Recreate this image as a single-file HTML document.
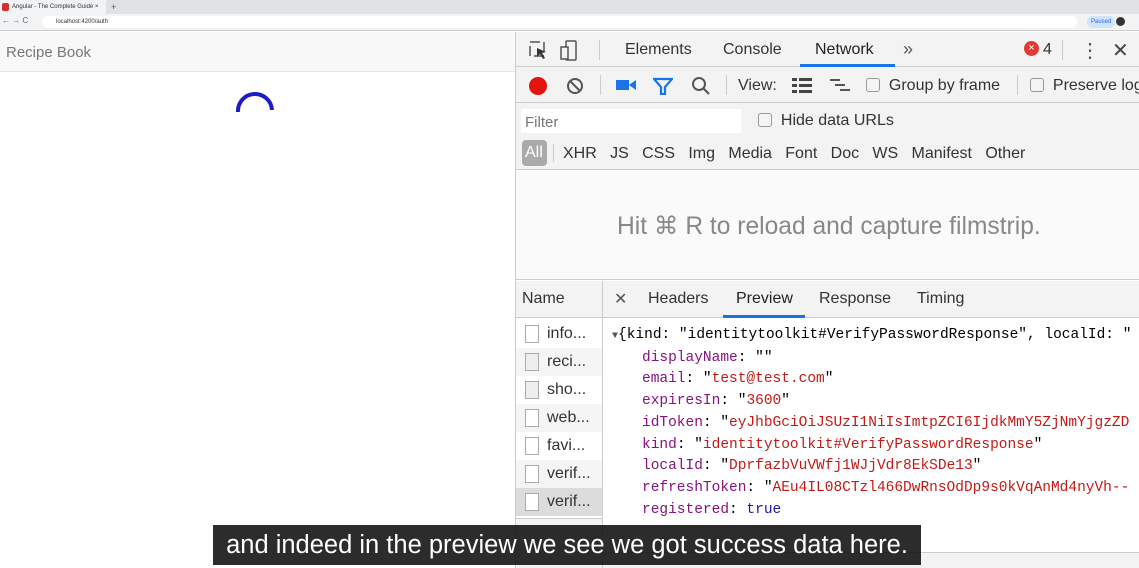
<!DOCTYPE html>
<html><head><style>
*{margin:0;padding:0;box-sizing:border-box}
body{width:1139px;height:568px;overflow:hidden;background:#fff;font-family:"Liberation Sans",sans-serif;position:relative}
.a{position:absolute}
.mono{font-family:"Liberation Mono",monospace;font-size:14.5px;white-space:nowrap}
.k{color:#881280}.s{color:#c41a16}.b{color:#1a1aa6}
.cb{display:inline-block;width:14px;height:14px;border:1px solid #999;border-radius:3px;background:#f4f4f4;vertical-align:-2px}
.t{font-size:16px;color:#333;white-space:nowrap}
.row{position:absolute;left:516px;width:86px;height:28px;font-size:16px;color:#333}
.row i{position:absolute;left:9px;top:5px;width:14px;height:18px;border:1px solid #aaa;background:#fff}
.row span{position:absolute;left:31px;top:5px}
</style></head><body>
<!-- chrome -->
<div class="a" style="left:0;top:0;width:1139px;height:14px;background:#dfe1e5"></div>
<div class="a" style="left:0;top:0;width:106px;height:14px;background:#f1f3f4;font-size:6px;color:#333;padding:4px 0 0 12px">Angular - The Complete Guide ×</div>
<div class="a" style="left:2px;top:3px;width:7px;height:8px;background:#d32f2f;border-radius:2px"></div>
<div class="a" style="left:111px;top:2px;font-size:9px;color:#555">+</div>
<div class="a" style="left:0;top:14px;width:1139px;height:17px;background:#f1f3f4;border-bottom:1px solid #ccc"></div>
<div class="a" style="left:2px;top:16px;font-size:8px;color:#666">← → C</div>
<div class="a" style="left:42px;top:16px;width:1035px;height:12px;background:#fff;border-radius:6px;font-size:6px;color:#333;padding:3px 0 0 14px">localhost:4200/auth</div>
<div class="a" style="left:1087px;top:16px;width:28px;height:12px;background:#d2e3fc;border-radius:6px;font-size:6px;color:#1a73e8;padding:3px 0 0 4px">Paused</div>
<div class="a" style="left:1116px;top:17px;width:9px;height:9px;background:#333;border-radius:50%"></div>
<!-- app -->
<div class="a" style="left:0;top:32px;width:516px;height:40px;background:#f8f8f8;border-bottom:1px solid #e7e7e7"></div>
<div class="a" style="left:6px;top:44px;font-size:15px;color:#777">Recipe Book</div>
<svg class="a" style="left:234px;top:92px" width="42" height="30"><path d="M4 20 A17 17 0 0 1 38 18" stroke="#1d1dc8" stroke-width="4" fill="none"/></svg>
<!-- devtools -->
<div class="a" style="left:515px;top:32px;width:1px;height:536px;background:#ccc"></div>
<div class="a" style="left:516px;top:32px;width:623px;height:35px;background:#f3f3f3;border-bottom:1px solid #ccc"></div>
<svg class="a" style="left:528px;top:40px" width="50" height="22"><rect x="2" y="2" width="14" height="14" fill="none" stroke="#555" stroke-width="1.5" stroke-dasharray="10 4"/><path d="M9 8 l9 4 -4 1 3 5 -2 1 -3 -5 -3 3z" fill="#333"/><rect x="38" y="1" width="10" height="19" rx="1" fill="none" stroke="#555" stroke-width="1.5"/><rect x="33" y="7" width="7" height="12" fill="#f3f3f3" stroke="#555" stroke-width="1.5"/></svg>
<div class="a" style="left:599px;top:40px;width:1px;height:20px;background:#ccc"></div>
<div class="a t" style="left:625px;top:41px">Elements</div>
<div class="a t" style="left:723px;top:41px">Console</div>
<div class="a t" style="left:815px;top:41px;color:#222">Network</div>
<div class="a" style="left:800px;top:64px;width:95px;height:3px;background:#1a73e8"></div>
<div class="a t" style="left:903px;top:39px;font-size:18px;color:#555">»</div>
<div class="a" style="left:1024px;top:41px;width:15px;height:15px;border-radius:50%;background:#e53935;color:#fff;font-size:11px;text-align:center;line-height:15px">×</div>
<div class="a t" style="left:1043px;top:41px">4</div>
<div class="a" style="left:1062px;top:40px;width:1px;height:20px;background:#ccc"></div>
<div class="a t" style="left:1080px;top:38px;font-size:20px;color:#555">⋮</div>
<div class="a t" style="left:1112px;top:38px;font-size:20px;color:#444">✕</div>
<!-- toolbar 2 -->
<div class="a" style="left:516px;top:67px;width:623px;height:36px;background:#f3f3f3;border-bottom:1px solid #ccc"></div>
<div class="a" style="left:529px;top:77px;width:18px;height:18px;border-radius:50%;background:#e5140f"></div>
<svg class="a" style="left:566px;top:77px" width="18" height="18"><circle cx="9" cy="9" r="7" fill="none" stroke="#555" stroke-width="2"/><path d="M4 4 L14 14" stroke="#555" stroke-width="2"/></svg>
<div class="a" style="left:600px;top:75px;width:1px;height:20px;background:#ccc"></div>
<svg class="a" style="left:616px;top:78px" width="22" height="14"><rect x="0" y="2" width="13" height="10" fill="#1a73e8"/><path d="M13 7 L20 2 V12z" fill="#1a73e8"/></svg>
<svg class="a" style="left:653px;top:77px" width="20" height="18"><path d="M1 2 H19 L12 10 V17 H8 V10Z" fill="none" stroke="#1a73e8" stroke-width="2.2"/></svg>
<svg class="a" style="left:691px;top:76px" width="20" height="20"><circle cx="8" cy="8" r="6" fill="none" stroke="#555" stroke-width="2"/><path d="M12 12 L18 18" stroke="#555" stroke-width="2.2"/></svg>
<div class="a" style="left:726px;top:75px;width:1px;height:20px;background:#ccc"></div>
<div class="a t" style="left:738px;top:77px">View:</div>
<svg class="a" style="left:792px;top:78px" width="20" height="15"><g fill="#444"><rect x="0" y="0" width="5" height="3"/><rect x="7" y="0" width="13" height="3"/><rect x="0" y="6" width="5" height="3"/><rect x="7" y="6" width="13" height="3"/><rect x="0" y="12" width="5" height="3"/><rect x="7" y="12" width="13" height="3"/></g></svg>
<svg class="a" style="left:830px;top:79px" width="22" height="14"><g fill="#555"><rect x="0" y="0" width="10" height="2"/><rect x="5" y="5" width="10" height="2"/><rect x="10" y="10" width="10" height="2"/></g></svg>
<div class="a t" style="left:866px;top:77px"><span class="cb"></span>&nbsp; Group by frame</div>
<div class="a" style="left:1017px;top:75px;width:1px;height:20px;background:#ccc"></div>
<div class="a t" style="left:1030px;top:77px"><span class="cb"></span>&nbsp; Preserve log</div>
<!-- filter row -->
<div class="a" style="left:516px;top:103px;width:623px;height:67px;background:#f3f3f3;border-bottom:1px solid #ccc"></div>
<div class="a" style="left:521px;top:109px;width:220px;height:24px;background:#fff;font-size:15px;color:#777;padding:5px 0 0 4px">Filter</div>
<div class="a t" style="left:758px;top:112px"><span class="cb"></span>&nbsp; Hide data URLs</div>
<div class="a" style="left:522px;top:140px;width:25px;height:26px;background:#aaa;border-radius:4px;color:#fff;font-size:16px;padding:4px 0 0 3px">All</div>
<div class="a" style="left:553px;top:144px;width:1px;height:18px;background:#ccc"></div>
<div class="a t" style="left:563px;top:145px">XHR&nbsp;&nbsp; JS&nbsp;&nbsp; CSS&nbsp;&nbsp; Img&nbsp;&nbsp; Media&nbsp;&nbsp; Font&nbsp;&nbsp; Doc&nbsp;&nbsp; WS&nbsp;&nbsp; Manifest&nbsp;&nbsp; Other</div>
<!-- filmstrip -->
<div class="a" style="left:516px;top:171px;width:623px;height:109px;background:#fafafa;border-bottom:1px solid #ccc"></div>
<div class="a" style="left:617px;top:211px;font-size:24.6px;color:#888;white-space:nowrap">Hit ⌘ R to reload and capture filmstrip.</div>
<!-- panes -->
<div class="a" style="left:516px;top:281px;width:623px;height:37px;background:#f3f3f3;border-bottom:1px solid #ccc"></div>
<div class="a" style="left:602px;top:281px;width:1px;height:287px;background:#ccc"></div>
<div class="a t" style="left:522px;top:290px">Name</div>
<div class="a t" style="left:614px;top:289px;color:#555">✕</div>
<div class="a t" style="left:648px;top:290px">Headers</div>
<div class="a t" style="left:736px;top:290px;color:#222">Preview</div>
<div class="a" style="left:723px;top:315px;width:82px;height:3px;background:#1a73e8"></div>
<div class="a t" style="left:819px;top:290px">Response</div>
<div class="a t" style="left:917px;top:290px">Timing</div>
<div class="row" style="top:320px;background:#fff"><i></i><span>info...</span></div>
<div class="row" style="top:348px;background:#f5f5f5"><i style="background:#eee"></i><span>reci...</span></div>
<div class="row" style="top:376px;background:#fff"><i style="background:#eee"></i><span>sho...</span></div>
<div class="row" style="top:404px;background:#f5f5f5"><i></i><span>web...</span></div>
<div class="row" style="top:432px;background:#fff"><i></i><span>favi...</span></div>
<div class="row" style="top:460px;background:#f5f5f5"><i></i><span>verif...</span></div>
<div class="row" style="top:488px;background:#dcdcdc"><i></i><span>verif...</span></div>
<div class="a" style="left:516px;top:518px;width:86px;height:50px;background:#f3f3f3;border-top:1px solid #ccc"></div>
<div class="a" style="left:603px;top:552px;width:536px;height:16px;background:#f3f3f3;border-top:1px solid #ccc"></div>
<div class="a mono" style="left:612px;top:325px;line-height:21.7px">
<div><span style="font-size:10px;color:#555">▼</span>{kind: "identitytoolkit#VerifyPasswordResponse", localId: "</div>
<div style="padding-left:30px"><span class="k">displayName</span>: ""</div>
<div style="padding-left:30px"><span class="k">email</span>: "<span class="s">test@test.com</span>"</div>
<div style="padding-left:30px"><span class="k">expiresIn</span>: "<span class="s">3600</span>"</div>
<div style="padding-left:30px"><span class="k">idToken</span>: "<span class="s">eyJhbGciOiJSUzI1NiIsImtpZCI6IjdkMmY5ZjNmYjgzZD</span></div>
<div style="padding-left:30px"><span class="k">kind</span>: "<span class="s">identitytoolkit#VerifyPasswordResponse</span>"</div>
<div style="padding-left:30px"><span class="k">localId</span>: "<span class="s">DprfazbVuVWfj1WJjVdr8EkSDe13</span>"</div>
<div style="padding-left:30px"><span class="k">refreshToken</span>: "<span class="s">AEu4IL08CTzl466DwRnsOdDp9s0kVqAnMd4nyVh--</span></div>
<div style="padding-left:30px"><span class="k">registered</span>: <span class="b">true</span></div>
</div>
<!-- caption -->
<div class="a" style="left:213px;top:525px;width:708px;height:40px;background:rgba(15,15,15,0.88);color:#fff;font-size:25.5px;text-align:center;line-height:40px;white-space:nowrap">and indeed in the preview we see we got success data here.</div>
</body></html>
